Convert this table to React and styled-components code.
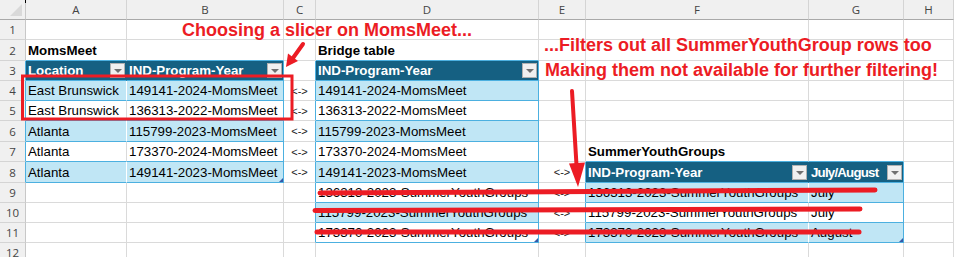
import React from 'react';
import styled, { createGlobalStyle, css } from 'styled-components';

const GRID = '#dadada';
const EDGE = '#4cb0e0';
const HEAD = '#156082';
const BAND = '#c0e6f5';
const RED = '#ec1c24';
const LINK = '<->';

const COLS = ['', 'A', 'B', 'C', 'D', 'E', 'F', 'G', 'H'];
const ROWS = [20, 20, 21, 20, 20, 20, 21, 20, 21, 20, 20, 20, 20];

const TABLES = [
  { cols: [1, 2], head: 3, last: 8 },
  { cols: [4], head: 3, last: 11 },
  { cols: [6, 7], head: 8, last: 11 },
];

const CONTENT = {
  2: { 1: 'MomsMeet', 4: 'Bridge table' },
  3: { 1: 'Location', 2: 'IND-Program-Year', 4: 'IND-Program-Year' },
  4: { 1: 'East Brunswick', 2: '149141-2024-MomsMeet', 3: LINK, 4: '149141-2024-MomsMeet' },
  5: { 1: 'East Brunswick', 2: '136313-2022-MomsMeet', 3: LINK, 4: '136313-2022-MomsMeet' },
  6: { 1: 'Atlanta', 2: '115799-2023-MomsMeet', 3: LINK, 4: '115799-2023-MomsMeet' },
  7: { 1: 'Atlanta', 2: '173370-2024-MomsMeet', 3: LINK, 4: '173370-2024-MomsMeet', 6: 'SummerYouthGroups' },
  8: { 1: 'Atlanta', 2: '149141-2023-MomsMeet', 3: LINK, 4: '149141-2023-MomsMeet', 5: LINK, 6: 'IND-Program-Year', 7: 'July/August' },
  9: { 4: '136313-2023-SummerYouthGroups', 5: LINK, 6: '136313-2023-SummerYouthGroups', 7: 'July' },
  10: { 4: '115799-2023-SummerYouthGroups', 5: LINK, 6: '115799-2023-SummerYouthGroups', 7: 'July' },
  11: { 4: '173370-2023-SummerYouthGroups', 5: LINK, 6: '173370-2023-SummerYouthGroups', 7: 'August' },
};

// header captions that need squeezing to sit beside their filter button
const SQUEEZE = { '8,7': true };

const tableAt = (r, c) =>
  TABLES.find((t) => t.cols.includes(c) && r >= t.head && r <= t.last);

// works out fill, borders and kind of one sheet cell
function cellInfo(r, c) {
  const text = (CONTENT[r] || {})[c];
  const t = tableAt(r, c);
  let kind = 'plain';
  if (t) kind = r === t.head ? 'header' : (r - t.head) % 2 ? 'band' : 'plain';
  else if (text === LINK) kind = 'link';
  else if (text) kind = 'title';

  let right = GRID;
  let bottom = GRID;
  if (t) {
    bottom = EDGE;
    const lastCol = t.cols[t.cols.length - 1];
    if (c === lastCol) right = EDGE;
    else right = kind === 'header' ? HEAD : kind === 'band' ? '#ffffff' : GRID;
  } else {
    const next = tableAt(r, c + 1);
    if (next && next.cols[0] === c + 1) right = EDGE;
    const below = tableAt(r + 1, c);
    if (below && below.head === r + 1) bottom = EDGE;
  }
  const corner = !!t && r === t.last && c === t.cols[t.cols.length - 1];
  return { text, kind, right, bottom, corner, squeeze: !!SQUEEZE[`${r},${c}`] };
}

const GlobalStyle = createGlobalStyle`
  html, body {
    margin: 0;
    padding: 0;
    background: #ffffff;
  }
  body {
    font-family: "Liberation Sans", Arial, sans-serif;
  }
`;

const Frame = styled.div`
  position: relative;
  width: 954px;
  height: 257px;
  overflow: hidden;
  background: #ffffff;
`;

const Sheet = styled.div`
  display: grid;
  grid-template-columns: 26px 101px 157px 32px 223px 47px 223px 95px 1fr;
  grid-template-rows: ${ROWS.map((h) => h + 'px').join(' ')};
`;

const ColHead = styled.div`
  box-sizing: border-box;
  display: flex;
  align-items: center;
  justify-content: center;
  background: #f0f0f0;
  border-right: 1px solid #d4d4d4;
  border-bottom: 1px solid #a9a9a9;
  font-family: "Open Sans", "Liberation Sans", sans-serif;
  font-size: 11.5px;
  color: #444444;
`;

const Corner = styled(ColHead)`
  position: relative;
  border-right-color: #c8c8c8;

  &::after {
    content: '';
    position: absolute;
    right: 3px;
    bottom: 3px;
    border-left: 12px solid transparent;
    border-bottom: 12px solid #d9d9d9;
  }
`;

const RowHead = styled.div`
  box-sizing: border-box;
  display: flex;
  align-items: center;
  justify-content: center;
  background: #f0f0f0;
  border-right: 1px solid ${({ $right }) => ($right === GRID ? '#c8c8c8' : $right)};
  border-bottom: 1px solid #d4d4d4;
  font-family: "Open Sans", "Liberation Sans", sans-serif;
  font-size: 11.5px;
  color: #444444;
`;

const Cell = styled.div`
  position: relative;
  box-sizing: border-box;
  display: flex;
  align-items: center;
  padding: 0 2px;
  min-width: 0;
  white-space: nowrap;
  font-size: 13.3px;
  color: #000000;
  background: #ffffff;
  border-right: 1px solid ${({ $right }) => $right};
  border-bottom: 1px solid ${({ $bottom }) => $bottom};

  ${({ $kind }) => $kind === 'title' && css`
    font-weight: bold;
  `}
  ${({ $kind }) => $kind === 'band' && css`
    background: ${BAND};
  `}
  ${({ $kind }) => $kind === 'header' && css`
    background: ${HEAD};
    color: #ffffff;
    font-weight: bold;
    justify-content: space-between;
    padding-right: 1px;
  `}
  ${({ $kind }) => $kind === 'link' && css`
    justify-content: center;
    font-size: 11px;
    color: #222222;
  `}
  ${({ $corner }) => $corner && css`
    &::after {
      content: '';
      position: absolute;
      right: 0;
      bottom: 0;
      border-left: 4px solid transparent;
      border-bottom: 4px solid #3558a8;
    }
  `}
`;

const Caption = styled.span`
  letter-spacing: ${({ $squeeze }) => ($squeeze ? '-0.8px' : 'normal')};
`;

const DropButton = styled.span`
  box-sizing: border-box;
  flex: none;
  display: flex;
  align-items: center;
  justify-content: center;
  width: 15px;
  height: 15px;
  background: #f0f0f0;
  border: 1px solid #b0b0b0;

  &::after {
    content: '';
    border-left: 4px solid transparent;
    border-right: 4px solid transparent;
    border-top: 4px solid #707070;
    margin-top: 1px;
  }
`;

const Ink = styled.svg`
  position: absolute;
  left: 0;
  top: 0;
  width: 954px;
  height: 257px;
  pointer-events: none;
`;

const Note = styled.span`
  position: absolute;
  left: ${({ $x }) => $x}px;
  top: ${({ $y }) => $y}px;
  font-family: "Liberation Sans", Arial, sans-serif;
  font-weight: bold;
  font-size: 18px;
  line-height: 18px;
  color: ${RED};
  white-space: nowrap;
`;

const App = () => {
  return (
    <Frame>
      <GlobalStyle />
      <Sheet>
        <Corner />
        {COLS.slice(1).map((name) => (
          <ColHead key={name}>{name}</ColHead>
        ))}
        {ROWS.slice(1).map((_, i) => {
          const r = i + 1;
          return (
            <React.Fragment key={r}>
              <RowHead $right={cellInfo(r, 0).right}>{r}</RowHead>
              {COLS.slice(1).map((_, j) => {
                const c = j + 1;
                const info = cellInfo(r, c);
                return (
                  <Cell
                    key={c}
                    $kind={info.kind}
                    $right={info.right}
                    $bottom={info.bottom}
                    $corner={info.corner}
                  >
                    {info.text && <Caption $squeeze={info.squeeze}>{info.text}</Caption>}
                    {info.kind === 'header' && <DropButton />}
                  </Cell>
                );
              })}
            </React.Fragment>
          );
        })}
      </Sheet>

      <Note $x={182} $y={21}>Choosing a slicer on MomsMeet...</Note>
      <Note $x={544} $y={36}>...Filters out all SummerYouthGroup rows too</Note>
      <Note $x={545} $y={61}>Making them not available for further filtering!</Note>

      <Ink viewBox="0 0 954 257">
        <line x1="25.5" y1="0" x2="25.5" y2="3" stroke="#000" strokeWidth="1" />
        <rect x="22.5" y="76" width="269.5" height="43" fill="none" stroke={RED} strokeWidth="3" />
        <line x1="303" y1="44" x2="293" y2="58" stroke={RED} strokeWidth="4" strokeLinecap="round" />
        <polygon points="286,67 298,61 288,53.5" fill={RED} />
        <line x1="572" y1="91" x2="576.5" y2="165" stroke={RED} strokeWidth="4" strokeLinecap="round" />
        <polygon points="578,187 585,162.5 569,163.5" fill={RED} />
        <g stroke={RED} strokeWidth="5" strokeLinecap="round">
          <line x1="320" y1="193" x2="875" y2="190" />
          <line x1="315" y1="210.5" x2="860" y2="209" />
          <line x1="317" y1="232" x2="859" y2="232" />
        </g>
      </Ink>
    </Frame>
  );
};

export default App;
